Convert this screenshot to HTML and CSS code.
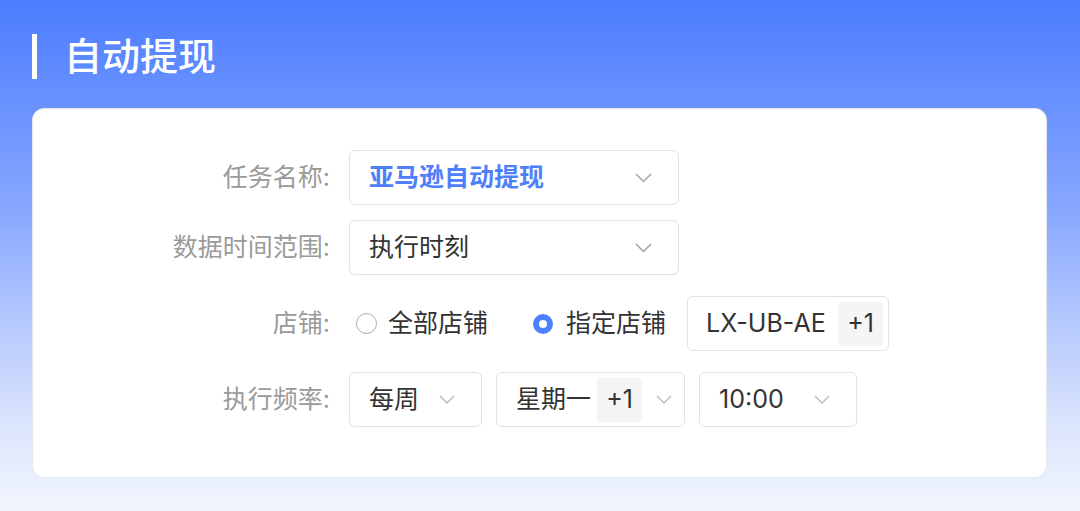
FILE: index.html
```html
<!DOCTYPE html>
<html lang="zh-CN">
<head>
<meta charset="utf-8">
<link rel="stylesheet" href="styles.css">
</head>
<body>
<div class="header">
  <span class="bar"></span>
  <h1 class="title">自动提现</h1>
</div>
<div class="card">
  <div class="row row1">
    <div class="label">任务名称:</div>
    <div class="select wide">
      <span class="value blue">亚马逊自动提现</span>
      <svg class="chev" width="17" height="10" viewBox="0 0 17 10"><polyline points="1,1 8.5,8.5 16,1" fill="none" stroke="#a3a3a3" stroke-width="1.5"/></svg>
    </div>
  </div>
  <div class="row row2">
    <div class="label">数据时间范围:</div>
    <div class="select wide">
      <span class="value">执行时刻</span>
      <svg class="chev" width="17" height="10" viewBox="0 0 17 10"><polyline points="1,1 8.5,8.5 16,1" fill="none" stroke="#a3a3a3" stroke-width="1.5"/></svg>
    </div>
  </div>
  <div class="row row3">
    <div class="label">店铺:</div>
    <div class="radios">
      <label class="radio"><span class="dot"></span><span class="value">全部店铺</span></label>
      <label class="radio on"><span class="dot"></span><span class="value">指定店铺</span></label>
      <div class="select shops">
        <span class="value">LX-UB-AE</span>
        <span class="tag">+1</span>
      </div>
    </div>
  </div>
  <div class="row row4">
    <div class="label">执行频率:</div>
    <div class="group">
      <div class="select s-week">
        <span class="value">每周</span>
        <svg class="chev" width="16" height="9" viewBox="0 0 16 9"><polyline points="1,1 8,8 15,1" fill="none" stroke="#b5b5b5" stroke-width="1.3"/></svg>
      </div>
      <div class="select s-day">
        <span class="value">星期一</span>
        <span class="tag">+1</span>
        <svg class="chev" width="16" height="9" viewBox="0 0 16 9"><polyline points="1,1 8,8 15,1" fill="none" stroke="#b5b5b5" stroke-width="1.3"/></svg>
      </div>
      <div class="select s-time">
        <span class="value">10:00</span>
        <svg class="chev" width="16" height="9" viewBox="0 0 16 9"><polyline points="1,1 8,8 15,1" fill="none" stroke="#b5b5b5" stroke-width="1.3"/></svg>
      </div>
    </div>
  </div>
</div>
</body>
</html>
```
FILE: styles.css
```css
html, body {
  margin: 0;
  padding: 0;
}
body {
  width: 1080px;
  height: 511px;
  overflow: hidden;
  background: linear-gradient(180deg, #4c7dff 0%, #86a6ff 40%, #d6e1fc 80%, #f2f6fe 100%);
  font-family: Inter, "Noto Sans CJK SC", "Noto Sans", sans-serif;
}
.header {
  display: flex;
  align-items: center;
  padding: 34px 0 0 32px;
  height: 45px;
}
.bar {
  width: 5px;
  height: 45px;
  background: #fff;
}
.title {
  margin: 0 0 0 27px;
  font-size: 38px;
  font-weight: 500;
  color: #fff;
  line-height: 45px;
  letter-spacing: 0;
}
.card {
  margin: 29px 33px 0 32px;
  height: 370px;
  box-sizing: border-box;
  background: #fff;
  border: 1px solid #e4e7ee;
  border-radius: 12px;
  padding-top: 41px;
}
.row {
  display: flex;
  align-items: center;
  height: 55px;
}
.row2 { margin-top: 15px; }
.row3 { margin-top: 21px; }
.row4 { margin-top: 21px; }
.label {
  width: 297px;
  text-align: right;
  padding-right: 19px;
  box-sizing: content-box;
  font-size: 25px;
  color: #9a9a9a;
  line-height: 1;
}
.value {
  font-size: 25px;
  color: #333;
  line-height: 1;
  white-space: nowrap;
}
.blue {
  color: #4f80fb;
  font-weight: 700;
}
.select {
  box-sizing: border-box;
  height: 55px;
  border: 1px solid #e2e2e2;
  border-radius: 6px;
  display: flex;
  align-items: center;
  background: #fff;
}
.wide {
  width: 330px;
  padding: 0 26px 0 19px;
  justify-content: space-between;
}
.radios {
  display: flex;
  align-items: center;
}
.radio {
  display: flex;
  align-items: center;
}
.radio .dot {
  box-sizing: border-box;
  width: 21px;
  height: 21px;
  border-radius: 50%;
  border: 1.5px solid #ababab;
  margin-left: 7px;
  margin-right: 11px;
}
.radio.on {
  margin-left: 45px;
}
.radio.on .dot {
  width: 20px;
  height: 20px;
  border: 6px solid #4f80fb;
  background: #fff;
  margin-left: 0;
  margin-right: 13px;
}
.shops {
  margin-left: 21px;
  width: 202px;
  padding: 0 5px 0 18px;
  justify-content: space-between;
}
.tag {
  width: 45px;
  height: 44px;
  background: #f5f5f5;
  border-radius: 3px;
  font-size: 25px;
  color: #333;
  display: flex;
  align-items: center;
  justify-content: center;
  line-height: 1;
}
.group {
  display: flex;
  gap: 14px;
}
.s-week {
  width: 133px;
  padding: 0 26px 0 19px;
  justify-content: space-between;
}
.s-day {
  width: 189px;
  padding: 0 12px 0 19px;
}
.s-day .tag {
  margin-left: 6px;
}
.s-day .chev {
  margin-left: auto;
}
.s-time {
  width: 158px;
  padding: 0 26px 0 19px;
  justify-content: space-between;
}
```
